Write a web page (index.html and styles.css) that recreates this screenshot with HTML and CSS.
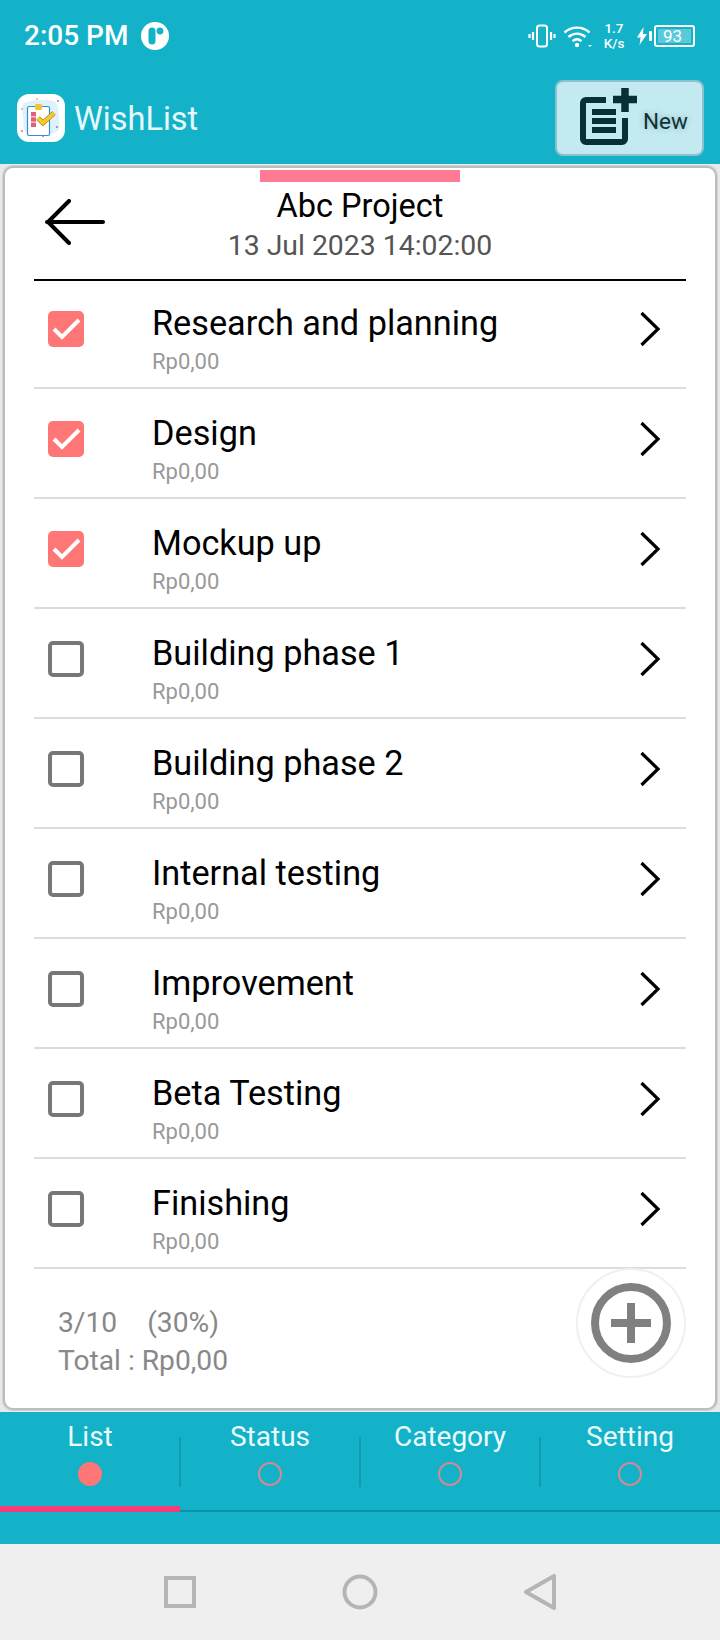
FILE: index.html
```html
<!DOCTYPE html>
<html lang="en">
<head>
<meta charset="utf-8">
<title>WishList</title>
<link rel="stylesheet" href="styles.css">
</head>
<body>
<div class="phone">
  <header class="status">
    <span class="clock">2:05 PM</span>
    <svg class="st-app" viewBox="0 0 28 28"><circle cx="14" cy="14" r="14" fill="#fff"/><rect x="7.500" y="5.500" width="7" height="17" rx="3.500" fill="#13b2c9"/><circle cx="19" cy="9" r="3.400" fill="#13b2c9"/></svg>
    <span class="st-right">
      <svg class="st-vib" viewBox="0 0 28 24" fill="none" stroke="#fff"><rect x="9" y="1.500" width="10" height="21" rx="2.500" stroke-width="2"/><path d="M5 8v8M1.500 10v4M23 8v8M26.500 10v4" stroke-width="2.200"/></svg>
      <svg class="st-wifi" viewBox="0 0 30 24" fill="none" stroke="#fff" stroke-width="2.400"><path d="M1.500 8.500C8.500 2 19.500 2 26.500 8.500M5.500 13C10.500 8.500 17.500 8.500 22.500 13M9.500 17.200c3-2.500 6-2.500 9 0"/><circle cx="14" cy="21" r="2.200" fill="#fff" stroke="none"/><path d="M25 21h4l-2 2z" fill="#fff" stroke="none"/></svg>
      <span class="st-speed"><span>1.7</span><span>K/s</span></span>
      <svg class="st-bolt" viewBox="0 0 10 18"><path d="M6.500 0 0 10.500h3.500L2.500 18 10 7H6z" fill="#fff"/></svg>
      <span class="st-nub"></span>
      <span class="st-batt"><span class="st-level">93</span></span>
    </span>
  </header>
  <div class="appbar">
    <div class="brand">
      <svg class="logo" viewBox="0 0 48 48">
        <rect width="48" height="48" rx="12" fill="#fff"/>
        <path d="M7 9c6-3 12-2 18-3 7 0 12 0 15 4 2 5 1 9 2 14 0 6 2 11-3 14-6 3-11 2-17 3-6 0-12 1-14-4-3-5-1-9-2-14-1-5-2-11 1-14z" fill="#dff2fb"/>
        <rect x="10.500" y="12.500" width="22" height="29" rx="1.500" fill="#fff" stroke="#2f8fd6" stroke-width="1.200"/>
        <rect x="18" y="10" width="7" height="6" rx="1.500" fill="#f4c430"/>
        <rect x="14" y="18" width="5" height="4.400" fill="#e0607a"/><rect x="14" y="23.300" width="5" height="4.400" fill="#e0607a"/><rect x="14" y="28.600" width="5" height="4.400" fill="#e0607a"/>
        <path d="M21 24l5 5 11-10" fill="none" stroke="#b8860b" stroke-width="5"/>
        <path d="M21 24l5 5 11-10" fill="none" stroke="#f7ca32" stroke-width="3.500"/>
        <circle cx="20" cy="5" r=".8" fill="#e0607a"/><circle cx="41" cy="7" r=".9" fill="#6b7fc0"/><circle cx="5" cy="15" r=".9" fill="#d9b93a"/><circle cx="40" cy="33" r=".9" fill="#6b7fc0"/><circle cx="5" cy="37" r=".9" fill="#e0607a"/><circle cx="26" cy="42" r="1" fill="#c06090"/>
      </svg>
      <span class="brand-name">WishList</span>
    </div>
    <button class="new-btn">
      <svg class="new-icon" viewBox="0 0 57 57" fill="none" stroke="#062f36" stroke-width="6"><path d="M26 12H6a3 3 0 0 0-3 3v36a3 3 0 0 0 3 3h36a3 3 0 0 0 3-3V30"/><path d="M12 24h24M12 33h24M12 42h24"/><path d="M33 11.500h24M45 0v24" stroke-width="7.500"/></svg>
      <span>New</span>
    </button>
  </div>
  <main class="content">
    <section class="card">
      <div class="accent"></div>
      <div class="card-head">
        <svg class="back" viewBox="0 0 60 46" fill="none" stroke="#000" stroke-width="4" stroke-linecap="round"><path d="M2 23h56M24 2 3 23l21 21"/></svg>
        <div class="head-text">
          <div class="title">Abc Project</div>
          <div class="date">13 Jul 2023 14:02:00</div>
        </div>
        <span></span>
      </div>
      <ul class="list">
        <li class="row"><span class="box on"><svg viewBox="0 0 36 36" fill="none" stroke="#fff" stroke-width="4"><path d="M6 18l8 8L31 9"/></svg></span><div class="row-text"><div class="name">Research and planning</div><div class="price">Rp0,00</div></div><svg class="chev" viewBox="0 0 22 36" fill="none" stroke="#000" stroke-width="3.200"><path d="M2.500 2 19 18 2.500 34"/></svg></li>
        <li class="row"><span class="box on"><svg viewBox="0 0 36 36" fill="none" stroke="#fff" stroke-width="4"><path d="M6 18l8 8L31 9"/></svg></span><div class="row-text"><div class="name">Design</div><div class="price">Rp0,00</div></div><svg class="chev" viewBox="0 0 22 36" fill="none" stroke="#000" stroke-width="3.200"><path d="M2.500 2 19 18 2.500 34"/></svg></li>
        <li class="row"><span class="box on"><svg viewBox="0 0 36 36" fill="none" stroke="#fff" stroke-width="4"><path d="M6 18l8 8L31 9"/></svg></span><div class="row-text"><div class="name">Mockup up</div><div class="price">Rp0,00</div></div><svg class="chev" viewBox="0 0 22 36" fill="none" stroke="#000" stroke-width="3.200"><path d="M2.500 2 19 18 2.500 34"/></svg></li>
        <li class="row"><span class="box"></span><div class="row-text"><div class="name">Building phase 1</div><div class="price">Rp0,00</div></div><svg class="chev" viewBox="0 0 22 36" fill="none" stroke="#000" stroke-width="3.200"><path d="M2.500 2 19 18 2.500 34"/></svg></li>
        <li class="row"><span class="box"></span><div class="row-text"><div class="name">Building phase 2</div><div class="price">Rp0,00</div></div><svg class="chev" viewBox="0 0 22 36" fill="none" stroke="#000" stroke-width="3.200"><path d="M2.500 2 19 18 2.500 34"/></svg></li>
        <li class="row"><span class="box"></span><div class="row-text"><div class="name">Internal testing</div><div class="price">Rp0,00</div></div><svg class="chev" viewBox="0 0 22 36" fill="none" stroke="#000" stroke-width="3.200"><path d="M2.500 2 19 18 2.500 34"/></svg></li>
        <li class="row"><span class="box"></span><div class="row-text"><div class="name">Improvement</div><div class="price">Rp0,00</div></div><svg class="chev" viewBox="0 0 22 36" fill="none" stroke="#000" stroke-width="3.200"><path d="M2.500 2 19 18 2.500 34"/></svg></li>
        <li class="row"><span class="box"></span><div class="row-text"><div class="name">Beta Testing</div><div class="price">Rp0,00</div></div><svg class="chev" viewBox="0 0 22 36" fill="none" stroke="#000" stroke-width="3.200"><path d="M2.500 2 19 18 2.500 34"/></svg></li>
        <li class="row"><span class="box"></span><div class="row-text"><div class="name">Finishing</div><div class="price">Rp0,00</div></div><svg class="chev" viewBox="0 0 22 36" fill="none" stroke="#000" stroke-width="3.200"><path d="M2.500 2 19 18 2.500 34"/></svg></li>
      </ul>
      <div class="summary">
        <div class="totals">
          <div class="count"><span>3/10</span><span>(30%)</span></div>
          <div>Total : Rp0,00</div>
        </div>
        <div class="add">
          <svg viewBox="0 0 88 88" fill="none" stroke="#808080" stroke-width="8"><circle cx="44" cy="44" r="36"/><path d="M24 44h40M44 24v40"/></svg>
        </div>
      </div>
    </section>
  </main>
  <nav class="tabs">
    <div class="tab-row">
      <div class="tab active"><span class="tab-label">List</span><span class="dot"></span></div>
      <div class="tab"><span class="tab-label">Status</span><span class="dot"></span></div>
      <div class="tab"><span class="tab-label">Category</span><span class="dot"></span></div>
      <div class="tab"><span class="tab-label">Setting</span><span class="dot"></span></div>
    </div>
    <div class="track"><span class="track-on"></span></div>
  </nav>
  <footer class="sysnav">
    <svg class="nav-i" viewBox="0 0 36 36" fill="none" stroke="#b5b5b5" stroke-width="4"><rect x="4" y="4" width="28" height="28"/></svg>
    <svg class="nav-i" viewBox="0 0 36 36" fill="none" stroke="#b5b5b5" stroke-width="4"><circle cx="18" cy="18" r="15.500"/></svg>
    <svg class="nav-i" viewBox="0 0 36 36" fill="none" stroke="#b5b5b5" stroke-width="4" stroke-linejoin="round"><path d="M32 2v32L4 18z"/></svg>
  </footer>
</div>
</body>
</html>
```
FILE: styles.css
```css
* { box-sizing: border-box; margin: 0; padding: 0; }
html, body { width: 720px; height: 1640px; overflow: hidden; background: #fff; }
body { font-family: Roboto, "Noto Sans", sans-serif; }
.phone { width: 720px; height: 1640px; display: flex; flex-direction: column; }

.status { height: 72px; background: #13b2c9; display: flex; align-items: center; padding: 0 25px 0 24px; color: #fff; }
.clock { font-size: 28px; font-weight: 500; line-height: 72px; }
.st-app { width: 28px; height: 28px; margin-left: 13px; }
.st-right { margin-left: auto; display: flex; align-items: center; }
.st-vib { width: 28px; height: 24px; }
.st-wifi { width: 30px; height: 24px; margin-left: 7px; }
.st-speed { display: flex; flex-direction: column; align-items: center; font-size: 13.500px; line-height: 15px; font-weight: 500; margin-left: 11px; width: 20px; }
.st-bolt { width: 10px; height: 18px; margin-left: 13px; }
.st-nub { width: 3px; height: 10px; background: #fff; margin-left: 2px; border-radius: 1px; }
.st-batt { width: 41px; height: 22px; border: 2px solid #fff; border-radius: 3px; margin-left: 2px; padding: 2px; display: flex; }
.st-level { flex: 1; background: rgba(255,255,255,.3); font-size: 17px; line-height: 14px; padding-left: 5px; }

.appbar { height: 92px; background: #13b2c9; display: flex; align-items: flex-start; justify-content: space-between; padding: 8px 16px 0 17px; }
.brand { display: flex; align-items: flex-start; margin-top: 14px; }
.logo { width: 48px; height: 48px; }
.brand-name { font-size: 32.500px; line-height: 38px; color: #e6f8fb; margin: 6px 0 0 9px; }
.new-btn { width: 149px; height: 76px; background: #c3eaf0; border: 2px solid #8bc1cd; border-radius: 8px; display: flex; align-items: center; padding-left: 23px; font-family: inherit; color: #0f3238; font-size: 22.500px; }
.new-icon { width: 57px; height: 57px; flex: none; margin-top: -3px; }
.new-btn span { margin-left: 6px; margin-top: 5px; text-shadow: 0 0 6px rgba(15,50,56,.25); }

.content { flex: 1; background: #e9e9e9; padding: 2px 3px; display: flex; min-height: 0; }
.card { flex: 1; background: #fff; border: 2px solid #bdbdbd; box-shadow: 0 0 0 1px rgba(189,189,189,.5); border-radius: 10px; display: flex; flex-direction: column; align-items: stretch; }
.accent { width: 200px; height: 12px; background: #ff7a95; align-self: center; margin-top: 2px; }
.card-head { height: 99px; margin: 0 29px; border-bottom: 2px solid #000; display: grid; grid-template-columns: 1fr auto 1fr; }
.back { width: 60px; height: 46px; margin: 17px 0 0 11px; }
.head-text { text-align: center; }
.title { font-size: 32.500px; line-height: 36px; color: #000; margin-top: 6px; }
.date { font-size: 28.400px; line-height: 36px; color: #555; margin-top: 4px; }

.list { list-style: none; margin: -2px 29px 0; }
.row { height: 110px; border-bottom: 2px solid #dcdcdc; display: flex; align-items: flex-start; }
.box { width: 36px; height: 36px; margin: 32px 0 0 14px; border: 4px solid #777; border-radius: 5px; flex: none; }
.box.on { background: #ff7676; border: 0; }
.box svg { display: block; width: 36px; height: 36px; }
.row-text { margin-left: 68px; flex: 1; margin-top: 23px; }
.name { font-size: 34.250px; line-height: 42px; color: #000; }
.price { font-size: 22px; line-height: 30px; color: #999; margin-top: 3px; }
.chev { width: 22px; height: 36px; margin: 32px 25px 0 0; flex: none; }

.summary { flex: 1; margin: 0 29px 0 53px; display: flex; align-items: flex-start; justify-content: space-between; }
.totals { font-size: 28.200px; line-height: 38px; color: #888; margin-top: 35px; }
.count { display: flex; gap: 30px; }
.add { width: 110px; height: 110px; border: 2px solid #f0f0f0; border-radius: 50%; margin-top: -1px; display: flex; align-items: center; justify-content: center; }
.add svg { width: 88px; height: 88px; }

.tabs { height: 132px; background: #13b2c9; display: flex; flex-direction: column; }
.tab-row { display: flex; height: 94px; }
.tab { width: 180px; display: flex; flex-direction: column; align-items: center; position: relative; color: #eafbfd; padding-top: 7px; }
.tab + .tab::before { content: ""; position: absolute; left: -1px; top: 25px; width: 2px; height: 50px; background: #0f9cb2; }
.tab-label { font-size: 28px; line-height: 36px; }
.dot { width: 24px; height: 24px; border-radius: 50%; border: 2px solid #d08a96; margin-top: 7px; }
.tab.active .dot { background: #ff7676; border-color: #ff7676; }
.track { height: 6px; position: relative; }
.track::after { content: ""; position: absolute; left: 0; right: 0; bottom: 0; height: 2px; background: #0d93a8; }
.track-on { position: absolute; left: 0; top: 0; width: 180px; height: 6px; background: #f73b7a; z-index: 1; }

.sysnav { height: 96px; background: #efefef; display: flex; align-items: center; justify-content: center; gap: 144px; }
.nav-i { width: 36px; height: 36px; }
```
